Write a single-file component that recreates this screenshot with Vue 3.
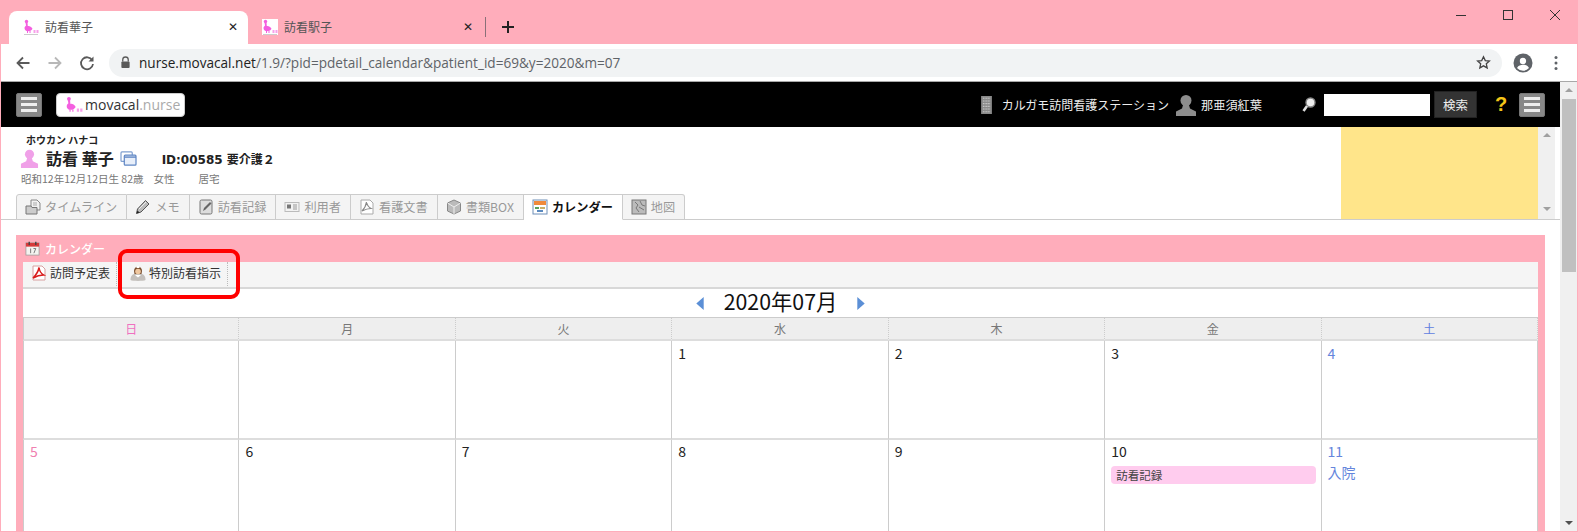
<template>
  <div class="window">
    <!-- browser chrome -->
    <div class="tabstrip">
      <div class="btab active">
        <svg class="fav" viewBox="0 0 16 16"><use href="#bird" /><path d="M1 15.500h14" stroke="#ccc" /></svg>
        <span class="btab-title">訪看華子</span>
        <span class="btab-close">✕</span>
      </div>
      <div class="btab">
        <svg class="fav fav-bg" viewBox="0 0 16 16"><use href="#bird" /><path d="M1 15.500h14" stroke="#ccc" /></svg>
        <span class="btab-title">訪看駅子</span>
        <span class="btab-close">✕</span>
      </div>
      <div class="tab-sep"></div>
      <svg class="newtab" viewBox="0 0 14 14"><path d="M7 1v12M1 7h12" stroke="#222" stroke-width="2" fill="none" /></svg>
      <div class="winctl">
        <svg viewBox="0 0 12 12"><path d="M1 6.500h10" stroke="#333" stroke-width="1" /></svg>
        <svg viewBox="0 0 12 12"><rect x="1.500" y="1.500" width="9" height="9" fill="none" stroke="#333" /></svg>
        <svg viewBox="0 0 12 12"><path d="M1 1l10 10M11 1L1 11" stroke="#333" stroke-width="1" fill="none" /></svg>
      </div>
    </div>
    <div class="toolbar">
      <svg class="nav" viewBox="0 0 16 16"><path d="M14.500 8H2.500M8 2.500L2.500 8 8 13.500" stroke="#5a5a5a" stroke-width="1.800" fill="none" /></svg>
      <svg class="nav" viewBox="0 0 16 16"><path d="M1.500 8h12M8 2.500L13.500 8 8 13.500" stroke="#b8b8b8" stroke-width="1.800" fill="none" /></svg>
      <svg class="nav" viewBox="0 0 16 16"><path d="M13.200 5.200A6 6 0 1 0 14 9" stroke="#5a5a5a" stroke-width="1.800" fill="none" /><path d="M14.500 1.500v5h-5z" fill="#5a5a5a" /></svg>
      <div class="urlbar">
        <svg class="lock" viewBox="0 0 12 14"><path d="M3 6V4a3 3 0 0 1 6 0v2" stroke="#5a5a5a" stroke-width="1.400" fill="none" /><rect x="1.500" y="6" width="9" height="7" rx="1" fill="#5a5a5a" /></svg>
        <span class="url"><b>nurse.movacal.net</b>/1.9/?pid=pdetail_calendar&amp;patient_id=69&amp;y=2020&amp;m=07</span>
        <svg class="star" viewBox="0 0 16 16"><path d="M8 1.800l1.900 4.100 4.400.5-3.300 3 .9 4.400L8 11.600l-3.900 2.200.9-4.400-3.300-3 4.400-.5z" fill="none" stroke="#444" stroke-width="1.400" /></svg>
      </div>
      <svg class="avatar" viewBox="0 0 20 20"><circle cx="10" cy="10" r="9.500" fill="#5f6368" /><circle cx="10" cy="8" r="3.200" fill="#fff" /><path d="M4 15c1.500-2.600 3.600-3.200 6-3.200s4.500.6 6 3.200a8 8 0 0 1-12 0z" fill="#fff" /></svg>
      <svg class="dots" viewBox="0 0 4 16"><circle cx="2" cy="2.500" r="1.500" fill="#5f6368" /><circle cx="2" cy="8" r="1.500" fill="#5f6368" /><circle cx="2" cy="13.500" r="1.500" fill="#5f6368" /></svg>
    </div>

    <!-- page -->
    <div class="viewport">
      <div class="page">
        <header class="topbar">
          <div class="burger"><i></i><i></i><i></i></div>
          <div class="logo">
            <svg class="logo-mark" viewBox="0 0 16 16"><use href="#bird" /></svg>
            <span class="logo-a">movacal</span><span class="logo-b">.nurse</span>
          </div>
          <div class="top-right">
            <svg class="bld" viewBox="0 0 12 20">
              <rect width="12" height="20" fill="#8a8a8a" />
              <path d="M2 2.500h8M2 5.500h8M2 8.500h8M2 11.500h8M2 14.500h8M2 17.500h8" stroke="#c8c8c8" stroke-width="1.200" stroke-dasharray="1.200 .6" />
            </svg>
            <span class="station">カルガモ訪問看護ステーション</span>
            <svg class="usr" viewBox="0 0 20 22"><circle cx="10" cy="6.500" r="5.500" fill="#8d8d8d" /><path d="M7 11h6l1 3.500 6 3V22H0v-4.500l6-3z" fill="#8d8d8d" /></svg>
            <span class="uname">那亜須紅葉</span>
            <svg class="loupe" viewBox="0 0 14 16"><circle cx="8.500" cy="5.500" r="4.500" fill="#eee" stroke="#888" stroke-width="1.400" /><path d="M5 9l-3.500 5" stroke="#ddd" stroke-width="2.600" /></svg>
            <input class="search" type="text" />
            <button class="search-btn">検索</button>
            <span class="help">?</span>
            <div class="burger"><i></i><i></i><i></i></div>
          </div>
        </header>

        <section class="patient">
          <div class="patient-info">
            <div class="kana">ホウカン ハナコ</div>
            <div class="name-row">
              <svg class="pink-user" viewBox="0 0 20 20"><circle cx="10" cy="5.500" r="4.800" fill="#f0a0e8" /><path d="M7.500 9.500h5l1 3.500 5.500 2.500V20H1v-4.500L6.500 13z" fill="#f0a0e8" /></svg>
              <span class="pname">訪看 華子</span>
              <svg class="copy" viewBox="0 0 18 16"><rect x="1" y="1" width="12" height="10" rx="1" fill="#fff" stroke="#7f9fd0" stroke-width="1.300" /><rect x="4.500" y="4.500" width="12.500" height="10.500" rx="1" fill="#e8effa" stroke="#5f86c4" stroke-width="1.300" /><path d="M4.500 6.500h12.500" stroke="#5f86c4" stroke-width="1.500" /></svg>
              <span class="pid">ID:00585 要介護２</span>
            </div>
            <div class="meta"><span>昭和12年12月12日生 82歳</span><span>女性</span><span>居宅</span></div>
            <nav class="ptabs">
              <div v-for="t in tabs" :key="t.label" class="ptab" :class="{ on: t.on }">
                <svg class="ptab-ico" viewBox="0 0 16 16" v-html="t.icon"></svg>
                <span>{{ t.label }}</span>
              </div>
            </nav>
          </div>
          <div class="note"></div>
          <div class="note-scroll"><span class="up small"></span><span class="down small"></span></div>
        </section>

        <section class="panel">
          <div class="panel-title">
            <svg class="cal-ico" viewBox="0 0 16 16">
              <rect x="1" y="2" width="14" height="13" fill="#f4f4f0" stroke="#999" stroke-width=".8" />
              <rect x="1" y="2" width="14" height="4" fill="#d63a3a" />
              <path d="M4.500 .8v3.500M11.500 .8v3.500" stroke="#444" stroke-width="1.500" />
              <path d="M6 8v5M9 8h2.500L9.500 13" stroke="#666" stroke-width=".9" fill="none" />
            </svg>
            <span>カレンダー</span>
          </div>
          <div class="panel-tools">
            <div class="tool">
              <svg class="tool-ico" viewBox="0 0 16 16"><path d="M2 1h9l3 3v11H2z" fill="#fff" stroke="#d8a0a0" /><path d="M8 2.500c-.6 3.500-2.400 7-6 10.500 3.500-2 7-3 10.500-3-2.500-1.500-4-4-4.500-7.500z" fill="none" stroke="#d91c1c" stroke-width="1.500" /></svg>
              <span>訪問予定表</span>
            </div>
            <div class="tool">
              <svg class="tool-ico" viewBox="0 0 16 16"><path d="M.5 15c0-4 2-5.500 3.500-6h8c1.500.5 3.500 2 3.500 6-2 1.200-13 1.200-15 0z" fill="#c4c0bc" /><path d="M5 10h6l-3 2.500z" fill="#fff" /><path d="M4 6c0-6 8-6 8 0l-.5 3h-7z" fill="#7a5030" /><circle cx="8" cy="6.500" r="2.800" fill="#f0c8a0" /><rect x="6.500" y="1" width="3" height="2" fill="#fff" /></svg>
              <span>特別訪看指示</span>
            </div>
          </div>
          <div class="month-row">
            <svg class="month-arrow" viewBox="0 0 8 14"><path d="M8 0v14L0 7z" fill="#5b8fd6" /></svg>
            <span class="month">2020年07月</span>
            <svg class="month-arrow" viewBox="0 0 8 14"><path d="M0 0v14l8-7z" fill="#5b8fd6" /></svg>
          </div>
          <div class="cal">
            <div v-for="d in weekdays" :key="d.label" class="wd" :class="d.cls">{{ d.label }}</div>
            <div v-for="(c, i) in cells" :key="i" class="cell" :class="[c.cls, i > 6 ? 'second' : '']">
              <div class="num">{{ c.day }}</div>
              <div v-if="c.event" class="event">{{ c.event }}</div>
              <div v-if="c.note" class="note-text">{{ c.note }}</div>
            </div>
          </div>
        </section>

        <!-- annotation over the toolbar button -->
        <div class="callout"></div>
      </div>
      <div class="vscroll">
        <span class="up"></span>
        <div class="thumb"></div>
        <span class="down"></span>
      </div>
    </div>

    <svg width="0" height="0" class="defs">
      <symbol id="bird" viewBox="0 0 16 16">
        <circle cx="3.500" cy="2.500" r="1.700" fill="#f45fe0" />
        <path d="M2.500 3.500h2l.3 3.500c1.500-.3 3.500.3 4.700 2.800-1 1.800-2.800 2.500-4.500 2.500-2.200 0-3.500-1.500-3.500-3.300 0-1.200 1.200-2 1.500-2.500z" fill="#f45fe0" />
        <path d="M4 12h1v2H4zM6.500 12h1v2h-1z" fill="#f45fe0" />
        <path d="M10.500 11h2v3h-2zM13.500 11h2v3h-2z" fill="#f7a0ea" />
      </symbol>
    </svg>
  </div>
</template>

<script setup>
const tabs = [
  { label: 'タイムライン', icon: '<path d="M6 1h6l3 3v7H6z" fill="#f2f2f2" stroke="#888"/><path d="M1 7h5l1 1.500h5V15H1z" fill="#ccc" stroke="#777"/><path d="M8 4h4M8 6h4" stroke="#aaa"/>' },
  { label: 'メモ', icon: '<path d="M1.500 14.500l1-4.500 8-8.500 3.500 3.500-8 8z" fill="#bbb" stroke="#555"/><path d="M1.500 14.500l1-3 2 2z" fill="#222"/><path d="M4 10l7-7" stroke="#eee"/>' },
  { label: '訪看記録', icon: '<rect x="2" y="1" width="12" height="14" rx="1.500" fill="#ddd" stroke="#777"/><path d="M5 12l1-3 6-6 1.500 1.500-6 6z" fill="#666"/>' },
  { label: '利用者', icon: '<rect x="1" y="3.500" width="14" height="9" fill="#f2f2f2" stroke="#bbb"/><rect x="3" y="5.500" width="4" height="4" fill="#777"/><path d="M9 6h4M9 8h4M9 10h4" stroke="#999"/>' },
  { label: '看護文書', icon: '<path d="M2 1h9l3 3v11H2z" fill="#fff" stroke="#aaa"/><path d="M7.500 3c-.5 3.500-2 6.500-4.500 9 3-1.500 6-2.500 9-2.500-2.500-1.500-4-3.500-4.500-6.500z" fill="none" stroke="#888" stroke-width="1.200"/>' },
  { label: '書類BOX', icon: '<path d="M8 1l6.500 3v8L8 15l-6.500-3V4z" fill="#bbb" stroke="#888"/><path d="M8 8l6.500-4M8 8L1.500 4M8 8v7" stroke="#eee"/>' },
  { label: 'カレンダー', on: true, icon: '<rect x="1" y="1" width="14" height="14" fill="#fff" stroke="#6f8fb8"/><rect x="2" y="2" width="12" height="4" fill="#f08a3c"/><rect x="3" y="8" width="4" height="2" fill="#5aa05a"/><rect x="8" y="8" width="5" height="2" fill="#c9b06a"/><rect x="5" y="11" width="6" height="2" fill="#5a8ac0"/>' },
  { label: '地図', icon: '<rect x="1" y="1" width="14" height="14" fill="#bbb" stroke="#777"/><path d="M4 3l3 3-2 3 3 4M9 2l2 4 3 1M8 8l5 3" stroke="#777" fill="none"/>' }
]

const weekdays = [
  { label: '日', cls: 'sun' },
  { label: '月' },
  { label: '火' },
  { label: '水' },
  { label: '木' },
  { label: '金' },
  { label: '土', cls: 'sat' }
]

const cells = [
  { day: '' }, { day: '' }, { day: '' },
  { day: 1 }, { day: 2 }, { day: 3 },
  { day: 4, cls: 'sat' },
  { day: 5, cls: 'sun' },
  { day: 6 }, { day: 7 }, { day: 8 }, { day: 9 },
  { day: 10, event: '訪看記録' },
  { day: 11, cls: 'sat', note: '入院' }
]
</script>

<style>
html, body { margin: 0; padding: 0; overflow: hidden; background: #fff; }
</style>

<style scoped>
.window { width: 1578px; height: 532px; box-sizing: border-box; border: 1px solid #ffadbb; border-top: 0; overflow: hidden; display: flex; flex-direction: column; font-family: "Noto Sans CJK JP", "Noto Sans", sans-serif; color: #222; }
.defs { position: absolute; }

.tabstrip { height: 44px; flex: none; background: #ffadbb; display: flex; align-items: flex-end; padding-left: 8px; position: relative; }
.btab { width: 239px; height: 33px; box-sizing: border-box; display: flex; align-items: center; padding: 0 10px 2px 14px; position: relative; }
.btab:not(.active) { padding-right: 14px; }
.btab.active { background: #fff; border-radius: 8px 8px 0 0; }
.fav { width: 16px; height: 16px; flex: none; }
.fav-bg { background: #fff; }
.btab-title { margin-left: 6px; font-size: 12px; color: #555; flex: 1; }
.btab-close { font-size: 12px; color: #222; font-family: "DejaVu Sans", sans-serif; }
.tab-sep { width: 1px; height: 20px; background: #8a7078; margin: 0 0 7px -2px; }
.newtab { width: 14px; height: 14px; margin: 0 0 10px 15px; }
.winctl { position: absolute; top: 9px; right: 16px; display: flex; gap: 35px; }
.winctl svg { width: 12px; height: 12px; }

.toolbar { height: 38px; flex: none; box-sizing: border-box; background: #fff; border-bottom: 1px solid #a8a8a8; display: flex; align-items: center; padding: 0 0 0 14px; }
.nav { width: 16px; height: 16px; margin-right: 16px; flex: none; }
.urlbar { width: 1393px; height: 28px; margin-left: -2px; background: #f1f3f4; border-radius: 14px; display: flex; align-items: center; padding: 0 11px 0 11px; box-sizing: border-box; }
.lock { width: 11px; height: 13px; flex: none; }
.url { margin-left: 8px; font-family: "Open Sans", sans-serif; font-size: 13.600px; color: #5f6368; flex: 1; white-space: nowrap; }
.url b { font-weight: 400; color: #222; }
.star { width: 15px; height: 15px; }
.avatar { width: 20px; height: 20px; margin-left: 11px; flex: none; }
.dots { width: 4px; height: 16px; margin-left: 21px; flex: none; }

.viewport { flex: 1; display: flex; min-height: 0; }
.page { width: 1559px; flex: none; position: relative; background: #fff; }

.topbar { height: 45px; background: #000; display: flex; align-items: center; padding-left: 15px; box-sizing: border-box; }
.burger { width: 26px; height: 24px; box-sizing: border-box; background: #888; border-radius: 2px; display: flex; flex-direction: column; justify-content: center; gap: 3px; padding: 0 4px; border: 1px solid #777; }
.burger i { display: block; height: 3px; background: #eee; }
.logo { margin-left: 14px; width: 129px; height: 24px; box-sizing: border-box; background: #fff; border: 1px solid #ccc; border-radius: 4px; display: flex; align-items: center; padding-left: 8px; font-family: "Open Sans", sans-serif; font-size: 14px; }
.logo-mark { width: 18px; height: 18px; margin-right: 2px; flex: none; }
.logo-a { color: #333; }
.logo-b { color: #aaa; }
.top-right { margin-left: auto; display: flex; align-items: center; padding-right: 15px; }
.bld { width: 11px; height: 18px; }
.station { font-size: 12px; color: #eee; margin-left: 10px; white-space: nowrap; }
.usr { width: 20px; height: 22px; margin-left: 7px; }
.uname { font-size: 12.200px; color: #eee; margin-left: 5px; white-space: nowrap; }
.loupe { width: 14px; height: 16px; margin-left: 40px; }
.search { width: 106px; height: 22px; box-sizing: border-box; border: 0; background: #fff; margin-left: 8px; padding: 0; }
.search-btn { width: 43px; height: 27px; margin-left: 4px; background: #333; border: 1px solid #222; color: #eee; font-family: inherit; font-size: 12.500px; padding: 0; }
.help { color: #f5c518; font-family: "Liberation Sans", sans-serif; font-weight: 700; font-size: 20px; margin-left: 18px; width: 12px; }
.top-right .burger { margin-left: 12px; }

.patient { height: 93px; box-sizing: border-box; border-bottom: 1px solid #ccc; display: flex; }
.patient-info { flex: 1; padding-left: 15px; display: flex; flex-direction: column; min-width: 0; }
.kana { font-size: 10px; font-weight: 700; line-height: 12px; margin: 7px 0 0 10px; color: #222; }
.name-row { display: flex; align-items: center; height: 22px; margin: 1px 0 0 4px; }
.pink-user { width: 19px; height: 19px; }
.pname { font-size: 16px; font-weight: 700; margin-left: 7px; color: #222; white-space: nowrap; }
.copy { width: 17px; height: 15px; margin-left: 6px; }
.pid { font-size: 12px; font-weight: 700; margin-left: 25px; font-family: "DejaVu Sans", "Noto Sans CJK JP", sans-serif; white-space: nowrap; }
.meta { font-size: 10.500px; color: #777; line-height: 14px; margin: 3px 0 0 5px; display: flex; gap: 10px; }
.meta span:nth-child(2) { margin-right: 14px; }
.ptabs { display: flex; margin-top: auto; margin-bottom: -1px; position: relative; }
.ptab { height: 26px; box-sizing: border-box; display: flex; align-items: center; padding: 0 9px 0 8px; gap: 4px; background: #f4f4f4; border: 1px solid #ccc; border-left: 0; color: #999; font-size: 12.200px; white-space: nowrap; }
.ptab:first-child { border-left: 1px solid #ccc; border-top-left-radius: 3px; }
.ptab:last-child { border-top-right-radius: 3px; }
.ptab.on { background: #fff; border-bottom-color: #fff; color: #111; font-weight: 700; }
.ptab-ico { width: 16px; height: 16px; flex: none; }
.note { width: 197px; background: #ffe58a; flex: none; }
.note-scroll { width: 17px; margin-right: 5px; flex: none; background: #f0f0f0; position: relative; }

.up, .down { position: absolute; left: 50%; margin-left: -4px; width: 0; height: 0; border-left: 4px solid transparent; border-right: 4px solid transparent; }
.up { top: 6px; border-bottom: 4px solid #a0a0a0; }
.down { bottom: 6px; border-top: 4px solid #505050; }
.small.up { top: 6px; }
.small.down { bottom: 8px; border-top-color: #a0a0a0; }

.panel { margin: 15px 0 0 15px; width: 1529px; box-sizing: border-box; padding: 0 7px; background: #ffadbb; }
.panel-title { height: 27px; display: flex; align-items: center; padding-left: 2px; color: #fff; font-size: 12px; font-weight: 500; }
.cal-ico { width: 15px; height: 15px; margin-right: 5px; }
.panel-tools { height: 27px; box-sizing: border-box; background: #f5f5f5; border-bottom: 2px solid #d8d8d8; display: flex; }
.tool { display: flex; align-items: center; gap: 3px; padding: 0 6px 3px 8px; height: 24px; box-sizing: border-box; font-size: 12px; color: #333; border-right: 1px dotted #bbb; white-space: nowrap; }
.tool + .tool { padding-left: 13px; }
.tool-ico { width: 16px; height: 16px; flex: none; }
.month-row { height: 28px; background: #fff; display: flex; align-items: center; justify-content: center; gap: 20px; }
.month { font-size: 21.300px; color: #111; white-space: nowrap; margin-bottom: 5px; }
.month-arrow { width: 8px; height: 13px; }

.cal { background: #fff; display: grid; grid-template-columns: repeat(7, 1fr); }
.wd { height: 24px; box-sizing: border-box; background: #eee; border-top: 1px solid #ccc; border-bottom: 2px solid #ddd; border-right: 1px dotted #ccc; display: flex; align-items: center; justify-content: center; padding-bottom: 1px; font-size: 12px; color: #777; }
.wd:first-child { border-left: 1px solid #ccc; }
.wd.sun { color: #f070c0; }
.wd.sat { color: #6080e0; }
.cell { height: 99px; box-sizing: border-box; border-right: 1px solid #ccc; border-bottom: 2px solid #ddd; padding: 1px 5px 0 6px; font-size: 14px; color: #222; }
.cell:nth-child(7n + 1) { border-left: 1px solid #ccc; }
.cell.second { height: 120px; padding-top: 0; }
.cell.sun { color: #f080b0; }
.cell.sat { color: #6585dc; }
.num { line-height: 22px; min-height: 22px; }
.event { background: #ffccee; border-radius: 4px; font-size: 11.500px; color: #444; line-height: 18px; padding-left: 5px; margin-top: 4px; }
.note-text { font-size: 14px; line-height: 20px; margin-top: 0; }

.callout { position: absolute; left: 117px; top: 167px; width: 122px; height: 50px; box-sizing: border-box; border: 4px solid #f00; border-radius: 9px; pointer-events: none; }

.vscroll { width: 17px; flex: none; background: #f0f0f0; position: relative; }
.thumb { position: absolute; left: 2px; right: 1px; top: 17px; height: 173px; background: #c0c0c0; }
</style>
